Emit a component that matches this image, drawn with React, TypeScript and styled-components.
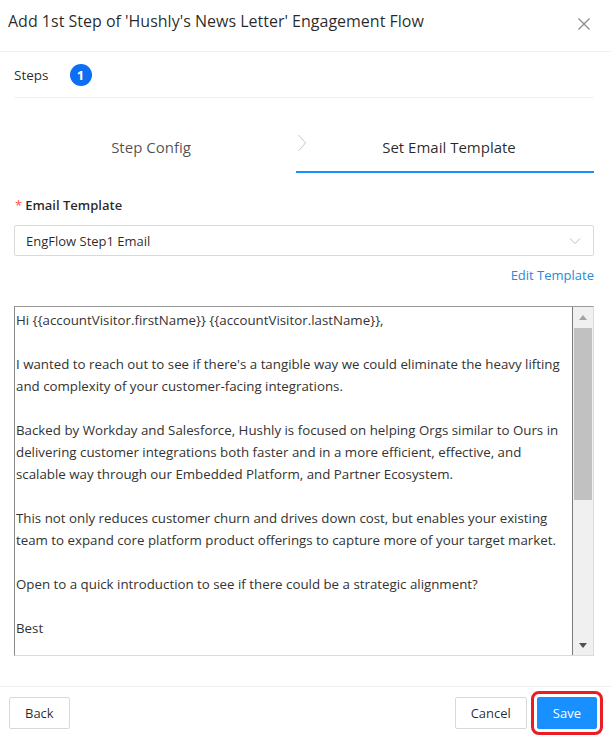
import React from 'react';
import styled, { createGlobalStyle } from 'styled-components';

const GlobalStyle = createGlobalStyle`
  html, body {
    margin: 0;
    padding: 0;
    background: #ffffff;
  }
  body {
    font-family: "Open Sans", "Noto Sans", Arial, sans-serif;
    color: rgba(0, 0, 0, 0.85);
  }
  * {
    box-sizing: border-box;
  }
`;

const emailParagraphs: string[][] = [
  ['Hi {{accountVisitor.firstName}} {{accountVisitor.lastName}},'],
  [
    "I wanted to reach out to see if there's a tangible way we could eliminate the heavy lifting",
    'and complexity of your customer-facing integrations.',
  ],
  [
    'Backed by Workday and Salesforce, Hushly is focused on helping Orgs similar to Ours in',
    'delivering customer integrations both faster and in a more efficient, effective, and',
    'scalable way through our Embedded Platform, and Partner Ecosystem.',
  ],
  [
    'This not only reduces customer churn and drives down cost, but enables your existing',
    'team to expand core platform product offerings to capture more of your target market.',
  ],
  ['Open to a quick introduction to see if there could be a strategic alignment?'],
  ['Best'],
];

export default function App() {
  return (
    <>
      <GlobalStyle />
      <SModal>
        <SHeader>
          <STitle>Add 1st Step of 'Hushly's News Letter' Engagement Flow</STitle>
          <SClose aria-label="close">
            <svg width="14" height="14" viewBox="0 0 14 14">
              <path d="M1.5 1.5 L12.5 12.5 M12.5 1.5 L1.5 12.5" stroke="#8c8c8c" strokeWidth="1.3" fill="none" />
            </svg>
          </SClose>
        </SHeader>

        <SBody>
          <SStepsRow>
            <SStepsLabel>Steps</SStepsLabel>
            <SBadge>1</SBadge>
          </SStepsRow>

          <STabs>
            <STab>Step Config</STab>
            <SChevron>
              <svg width="10" height="18" viewBox="0 0 10 18">
                <path d="M1.5 1 L8.5 9 L1.5 17" stroke="#c8c8c8" strokeWidth="1" fill="none" />
              </svg>
            </SChevron>
            <STab active>Set Email Template</STab>
          </STabs>

          {/* テンプレート選択 */}
          <SLabel>
            <SRequired>*</SRequired>Email Template
          </SLabel>
          <SSelect>
            <span>EngFlow Step1 Email</span>
            <svg width="12" height="8" viewBox="0 0 12 8">
              <path d="M1 1.5 L6 6.5 L11 1.5" stroke="#bfbfbf" strokeWidth="1" fill="none" />
            </svg>
          </SSelect>

          <SLinkRow>
            <SLink href="#">Edit Template</SLink>
          </SLinkRow>

          <SEditor>
            <SEditorContent>
              {emailParagraphs.map((lines, i) => (
                <SPara key={i}>
                  {lines.map((line, j) => (
                    <SLine key={j}>{line}</SLine>
                  ))}
                </SPara>
              ))}
            </SEditorContent>
            <SScrollbar>
              <SArrow>
                <svg width="8" height="5" viewBox="0 0 8 5">
                  <path d="M0 5 L4 0 L8 5 Z" fill="#a3a3a3" />
                </svg>
              </SArrow>
              <STrack>
                <SThumb />
              </STrack>
              <SArrow>
                <svg width="8" height="5" viewBox="0 0 8 5">
                  <path d="M0 0 L8 0 L4 5 Z" fill="#505050" />
                </svg>
              </SArrow>
            </SScrollbar>
          </SEditor>
        </SBody>

        <SFooter>
          <SButton>Back</SButton>
          <SFooterRight>
            <SButton>Cancel</SButton>
            <SButton primary highlighted>Save</SButton>
          </SFooterRight>
        </SFooter>
      </SModal>
    </>
  );
}

const SModal = styled.div`
  width: 611px;
  height: 744px;
  display: flex;
  flex-direction: column;
  background: #ffffff;
`;

const SHeader = styled.div`
  height: 52px;
  padding: 0 20px 0 8px;
  display: flex;
  align-items: center;
  justify-content: space-between;
  border-bottom: 1px solid #f0f0f0;
`;

const STitle = styled.div`
  font-size: 16px;
  line-height: 22px;
  margin-top: -10px;
  color: rgba(0, 0, 0, 0.85);
`;

const SClose = styled.button`
  border: none;
  background: none;
  padding: 0;
  margin-top: -3px;
  width: 14px;
  height: 14px;
  display: flex;
  cursor: pointer;
`;

const SBody = styled.div`
  flex: 1;
  padding: 0 17px 0 14px;
  display: flex;
  flex-direction: column;
`;

const SStepsRow = styled.div`
  height: 46px;
  display: flex;
  align-items: center;
  gap: 21px;
  border-bottom: 1px solid #f0f0f0;
`;

const SStepsLabel = styled.span`
  font-size: 13.5px;
  color: rgba(0, 0, 0, 0.85);
`;

const SBadge = styled.span`
  width: 22px;
  height: 22px;
  border-radius: 50%;
  background: #0b6ef3;
  color: #ffffff;
  font-size: 13px;
  font-weight: 700;
  display: flex;
  align-items: center;
  justify-content: center;
`;

const STabs = styled.div`
  margin-top: 24px;
  display: flex;
  align-items: flex-start;
`;

const STab = styled.div<{ active?: boolean }>`
  flex: ${({ active }) => (active ? '1' : '0 0 282px')};
  height: 51px;
  padding-right: ${({ active }) => (active ? '0' : '8px')};
  padding-left: ${({ active }) => (active ? '8px' : '0')};
  display: flex;
  align-items: center;
  justify-content: center;
  font-size: 15px;
  color: ${({ active }) => (active ? 'rgba(0, 0, 0, 0.85)' : 'rgba(0, 0, 0, 0.7)')};
  border-bottom: 2px solid ${({ active }) => (active ? '#1890ff' : 'transparent')};
`;

const SChevron = styled.div`
  width: 0;
  padding-top: 12px;
  overflow: visible;
  display: flex;

  svg {
    flex-shrink: 0;
    margin-left: 1px;
  }
`;

const SLabel = styled.div`
  margin-top: 22px;
  height: 20px;
  line-height: 20px;
  font-size: 13px;
  font-weight: 600;
  color: rgba(0, 0, 0, 0.85);
`;

const SRequired = styled.span`
  color: #ff4d4f;
  margin: 0 3px 0 1px;
  font-weight: 400;
`;

const SSelect = styled.div`
  margin-top: 10px;
  height: 31px;
  border: 1px solid #d9d9d9;
  border-radius: 2px;
  padding: 0 12px 0 11px;
  display: flex;
  align-items: center;
  justify-content: space-between;
  font-size: 13px;
  color: rgba(0, 0, 0, 0.85);
`;

const SLinkRow = styled.div`
  margin-top: 9px;
  height: 20px;
  display: flex;
  justify-content: flex-end;
`;

const SLink = styled.a`
  font-size: 13px;
  line-height: 20px;
  color: #2b8ad8;
  text-decoration: none;
`;

const SEditor = styled.div`
  margin-top: 21px;
  height: 350px;
  display: flex;
  border-top: 1px solid #9a9a9a;
  border-left: 1px solid #8a8a8a;
  border-right: 1px solid #dcdcdc;
  border-bottom: 1px solid #dcdcdc;
  overflow: hidden;
`;

const SEditorContent = styled.div`
  flex: 1;
  padding: 2px 0 0 1px;
  border-right: 1px solid #7a7a7a;
  font-family: "Open Sans", "Noto Sans", Arial, sans-serif;
  font-size: 13.3px;
  line-height: 22px;
  color: #333333;
  overflow: hidden;
`;

const SPara = styled.div`
  margin-bottom: 22px;
`;

const SLine = styled.div`
  white-space: nowrap;
`;

const SScrollbar = styled.div`
  width: 20px;
  background: #f0f0f0;
  display: flex;
  flex-direction: column;
`;

const SArrow = styled.div`
  height: 20px;
  display: flex;
  align-items: center;
  justify-content: center;
`;

const STrack = styled.div`
  flex: 1;
  padding: 1px 1px 0;
`;

const SThumb = styled.div`
  height: 172px;
  background: #c1c1c1;
`;

const SFooter = styled.div`
  height: 58px;
  border-top: 1px solid #f0f0f0;
  padding: 10px 14px 0 9px;
  display: flex;
  align-items: flex-start;
  justify-content: space-between;
`;

const SFooterRight = styled.div`
  display: flex;
  gap: 10px;
`;

const SButton = styled.button<{ primary?: boolean; highlighted?: boolean }>`
  height: 32px;
  padding: 0 15px;
  font-family: "Open Sans", "Noto Sans", Arial, sans-serif;
  font-size: 13px;
  border-radius: 2px;
  border: 1px solid ${({ primary }) => (primary ? '#1890ff' : '#d9d9d9')};
  background: ${({ primary }) => (primary ? '#1890ff' : '#ffffff')};
  color: ${({ primary }) => (primary ? '#ffffff' : 'rgba(0, 0, 0, 0.85)')};
  outline: ${({ highlighted }) => (highlighted ? '3px solid #ec1c24' : 'none')};
  outline-offset: 3px;
  cursor: pointer;
`;
